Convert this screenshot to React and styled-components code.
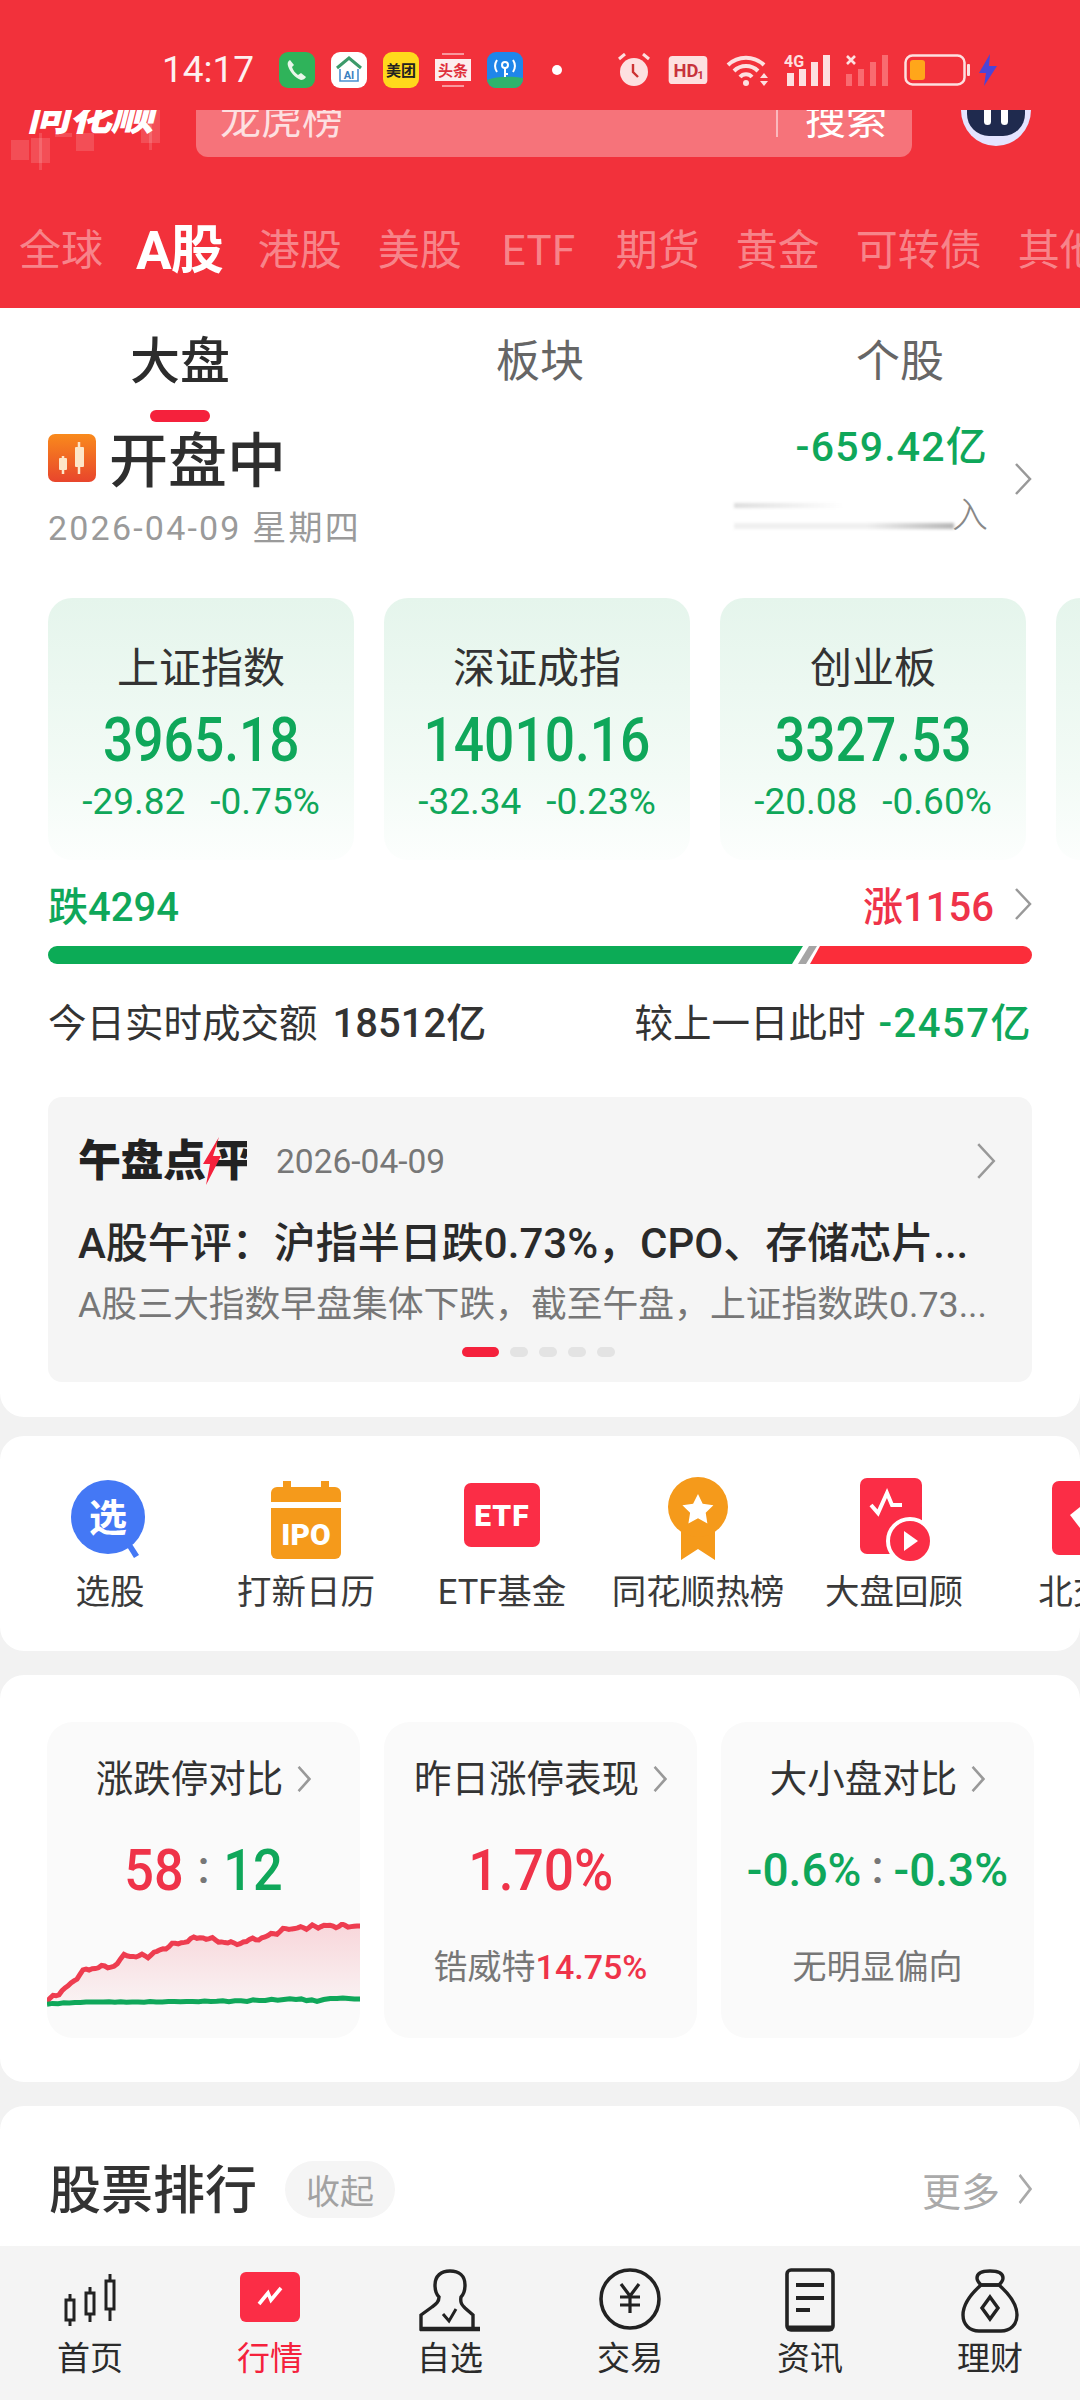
import React from 'react';
import styled, { createGlobalStyle } from 'styled-components';

const RED = '#f2313b';
const UP = '#ef3349';
const DOWN = '#0fa75a';
const CJK = `Roboto, "Noto Sans CJK SC", sans-serif`;

const Global = createGlobalStyle`
  html, body { margin: 0; padding: 0; background: #f2f2f2; }
  body { font-family: ${CJK}; overflow: hidden; }
  * { box-sizing: border-box; }
`;

const Page = styled.div`
  width: 1080px; height: 2400px; display: flex; flex-direction: column; overflow: hidden; background: #f2f2f2;
`;
const Header = styled.header`
  height: 308px; background: ${RED}; flex: none; overflow: hidden;
`;
const StatusBar = styled.div`
  height: 110px; display: flex; align-items: center; padding: 30px 0 0 162px; color: #fff;
`;
const Time = styled.span`
  font-size: 37px; width: 117px; color: #fdf0f0; line-height: 40px;
`;
const AppIcon = styled.svg`
  width: ${p => p.$w || 36}px; height: ${p => p.$h || 36}px; margin-right: ${p => p.$mr ?? 16}px; flex: none; display: block;
`;
const Toolbar = styled.div`
  height: 60px; display: flex; align-items: flex-end; overflow: hidden; padding-left: 27px;
`;
const Logo = styled.div`
  width: 169px; height: 60px; flex: none; position: relative;
`;
const LogoText = styled.span`
  position: absolute; left: 0; bottom: 32px; font-size: 43px; line-height: 46px; font-weight: 900; font-style: italic; color: #fff; letter-spacing: -1px;
`;
const LogoDeco = styled.svg`
  position: absolute; left: -16px; top: 0; width: 185px; height: 60px;
`;
const SearchBox = styled.div`
  width: 716px; height: 74px; flex: none; margin-bottom: 13px; border-radius: 12px; background: rgba(255,255,255,.32);
  display: flex; align-items: center; padding-left: 24px; color: rgba(255,255,255,.78); font-size: 41px;
`;
const SearchHint = styled.span`
  flex: 1; line-height: 46px;
`;
const SearchDivider = styled.span`
  width: 2px; height: 42px; background: rgba(255,255,255,.5); margin-top: -8px;
`;
const SearchBtn = styled.span`
  margin: 0 25px 0 27px; color: #fff; font-size: 41px; line-height: 46px;
`;
const Robot = styled.svg`
  width: 70px; height: 76px; margin: 0 0 24px 49px; flex: none; display: block;
`;
const MarketTabs = styled.nav`
  display: flex; align-items: center; height: 70px; margin-top: 46px; padding-left: 19px; gap: 36px; white-space: nowrap;
`;
const MarketTab = styled.span`
  font-size: ${p => (p.$active ? 53 : 42)}px; font-weight: ${p => (p.$active ? 700 : 400)}; color: ${p => (p.$active ? '#fff' : 'rgba(255,255,255,.42)')};
  letter-spacing: ${p => (p.$active ? '-1px' : p.$latin ? '.5px' : '0')}; line-height: 60px; flex: none;
  padding: 0 ${p => (p.$latin ? 4 : 0)}px; margin: 0 ${p => (p.$active ? '-1px 0 -3px' : '0')};
`;

const Section = styled.section`
  background: #fff; flex: none; height: ${p => p.$h}px; margin-bottom: ${p => p.$mb ?? 24}px;
  border-radius: ${p => (p.$flat ? '0 0 24px 24px' : '24px')}; overflow: hidden;
`;
const TopTabs = styled.div`
  display: grid; grid-template-columns: repeat(3, 360px); height: 114px;
`;
const TopTab = styled.div`
  display: flex; flex-direction: column; align-items: center; padding-top: 25px;
`;
const TopTabLabel = styled.span`
  font-size: ${p => (p.$active ? 50 : 44)}px; line-height: 58px; font-weight: ${p => (p.$active ? 500 : 400)}; color: ${p => (p.$active ? '#2c2c2c' : '#666')};
`;
const TopTabBar = styled.i`
  display: block; width: 60px; height: 12px; border-radius: 6px; background: #f5213c; margin-top: 19px; visibility: ${p => (p.$active ? 'visible' : 'hidden')};
`;
const MarketHead = styled.div`
  display: flex; justify-content: space-between; padding: 10px 48px 0 48px; height: 176px;
`;
const HeadLeft = styled.div`
  display: flex; flex-direction: column;
`;
const HeadTitleRow = styled.div`
  display: flex; align-items: flex-start; gap: 13px;
`;
const HeadTitle = styled.h1`
  margin: 0; font-size: 59px; line-height: 60px; font-weight: 500; color: #2e2e2e;
`;
const HeadIcon = styled.svg`
  width: 48px; height: 48px; margin-top: 2px; display: block;
`;
const HeadDate = styled.div`
  font-size: 34px; line-height: 40px; color: #9a9a9a; margin-top: 16px; letter-spacing: 2.2px;
`;
const HeadRight = styled.div`
  display: flex; align-items: center; gap: 26px; height: 110px; margin-top: -8px;
`;
const FlowCol = styled.div`
  display: flex; flex-direction: column; align-items: flex-end;
`;
const FlowValue = styled.div`
  font-size: 41px; line-height: 46px; font-weight: 500; color: ${DOWN}; letter-spacing: 1.2px;
`;
const FlowHidden = styled.div`
  display: flex; align-items: center; margin-top: 28px; font-size: 36px; font-weight: 300; color: #888; line-height: 36px;
`;
const FlowFade = styled.div`
  width: 220px; height: 26px; margin-right: -2px; filter: blur(1.5px);
  background:
    linear-gradient(90deg, #dcdcdc, #fff 50%) top / 100% 5px no-repeat,
    linear-gradient(90deg, #f0f0f0, #f0f0f0 60%, #b5b5b5) bottom / 100% 6px no-repeat;
`;
const IndexRow = styled.div`
  display: flex; gap: 30px; padding-left: 48px; overflow: hidden;
`;
const IndexCard = styled.div`
  flex: none; width: 306px; height: 262px; border-radius: 24px; background: linear-gradient(180deg, #e5f5ec 0%, #f3fbf6 68%, #fcfefd 100%);
  display: flex; flex-direction: column; align-items: center; padding-top: 46px;
`;
const IndexName = styled.div`
  font-size: 42px; line-height: 50px; color: #333;
`;
const IndexValue = styled.div`
  font-size: 62px; line-height: 72px; font-weight: 500; color: ${DOWN}; transform: scaleX(.86); margin-top: 10px;
`;
const IndexDelta = styled.div`
  display: flex; gap: 25px; font-size: 37px; line-height: 42px; color: ${DOWN}; margin-top: 5px; white-space: nowrap;
`;
const BreadthRow = styled.div`
  display: flex; justify-content: space-between; align-items: center; padding: 0 48px; margin-top: 21px; height: 46px;
  font-size: 40px; font-weight: 500;
`;
const BreadthVal = styled.span`
  color: ${p => (p.$up ? UP : DOWN)};
`;
const BreadthRight = styled.div`
  display: flex; align-items: center; gap: 20px;
`;
const Bar = styled.div`
  margin: 19px 48px 0; height: 18px; display: flex; border-radius: 9px; overflow: hidden; position: relative;
`;
const BarSvg = styled.svg`
  width: 984px; height: 18px; display: block;
`;
const TurnoverRow = styled.div`
  display: flex; justify-content: space-between; padding: 0 48px; margin-top: 36px; height: 48px; font-size: 38.5px; line-height: 48px; color: #333;
`;
const TurnoverVal = styled.b`
  font-weight: 500; color: ${p => (p.$down ? DOWN : '#333')}; margin-left: ${p => (p.$down ? 13 : 15)}px; font-size: 40px; letter-spacing: ${p => (p.$down ? 1.5 : 0)}px;
`;
const ReviewCard = styled.div`
  margin: 49px 48px 0; height: 285px; background: #f5f5f5; border-radius: 14px; padding: 38px 36px 0 30px; display: flex; flex-direction: column;
`;
const ReviewHead = styled.div`
  display: flex; align-items: center; height: 52px;
`;
const ReviewBrand = styled.div`
  display: flex; align-items: center; font-size: 43px; line-height: 50px; font-weight: 900; color: #222; width: 198px; letter-spacing: -.5px;
`;
const Bolt = styled.svg`
  width: 20px; height: 48px; margin: 0 -9px 0 -4px; flex: none; display: block; position: relative; z-index: 1;
`;
const BrandClip = styled.span`
  display: block; width: 34px; overflow: hidden; white-space: nowrap;
`;
const ReviewDate = styled.span`
  font-size: 33.5px; color: #777; flex: 1;
`;
const ReviewTitle = styled.div`
  font-size: 42px; line-height: 50px; font-weight: 500; color: #2a2a2a; margin-top: 32px; white-space: nowrap;
`;
const ReviewDesc = styled.div`
  font-size: 35.8px; line-height: 44px; color: #777; margin-top: 14px; white-space: nowrap;
`;
const Dots = styled.div`
  display: flex; justify-content: center; gap: 11px; margin-top: 20px; margin-left: 3px;
`;
const Dot = styled.i`
  display: block; height: 10px; border-radius: 5px; width: ${p => (p.$on ? 37 : 18)}px; background: ${p => (p.$on ? '#f5213c' : '#e3e3e3')};
`;
const ShortcutRow = styled.div`
  display: flex; padding: 41px 0 0 12px; overflow: hidden;
`;
const Shortcut = styled.div`
  flex: none; width: 196px; display: flex; flex-direction: column; align-items: center;
`;
const ShortcutIcon = styled.svg`
  width: 100px; height: 84px; display: block;
`;
const ShortcutLabel = styled.div`
  font-size: 34.5px; line-height: 42px; color: #3a3a3a; margin-top: 10px; white-space: nowrap;
`;
const StatRow = styled.div`
  display: grid; grid-template-columns: repeat(3, 313px); gap: 24px; padding: 47px 0 0 47px;
`;
const StatCard = styled.div`
  height: 316px; background: #fafafa; border-radius: 26px; display: flex; flex-direction: column; align-items: center; padding-top: 35px; overflow: hidden;
`;
const StatHead = styled.div`
  display: flex; align-items: center; gap: 14px; font-size: 37.5px; line-height: 44px; color: #333;
`;
const StatValue = styled.div`
  display: flex; align-items: center; justify-content: center; gap: ${p => p.$gap ?? 0}px; height: 70px; margin-top: 34px; font-size: ${p => p.$size || 58}px; font-weight: 500; white-space: nowrap;
`;
const Num = styled.span`
  color: ${p => (p.$c === 'up' ? UP : DOWN)}; display: inline-block; transform: scaleX(${p => p.$sx || 1});
`;
const Colon = styled.span`
  color: #777; font-size: 46px; margin: 0 ${p => p.$m ?? 8}px; position: relative; top: -3px;
`;
const StatSub = styled.div`
  font-size: 34px; line-height: 40px; color: #777; margin-top: 42px; white-space: nowrap;
`;
const StatSubNum = styled.span`
  color: ${UP}; font-weight: 500;
`;
const Sparkline = styled.svg`
  width: 313px; height: 92px; display: block; margin-top: 17px; flex: none;
`;
const RankHead = styled.div`
  display: flex; align-items: center; padding: 47px 48px 0 49px;
`;
const RankTitle = styled.h2`
  margin: 6px 0 0; font-size: 52px; line-height: 66px; font-weight: 500; color: #333;
`;
const Pill = styled.span`
  width: 110px; height: 57px; background: #f5f5f5; border-radius: 29px; margin-left: 28px; font-size: 34px; color: #a2a2a2;
  display: flex; align-items: center; justify-content: center;
`;
const More = styled.div`
  margin-left: auto; display: flex; align-items: center; gap: 18px; font-size: 39px; color: #aaa;
`;
const TabBar = styled.nav`
  height: 154px; margin-top: auto; flex: none; background: #f4f4f4; display: grid; grid-template-columns: repeat(6, 180px); position: relative;
`;
const TabItem = styled.div`
  display: flex; flex-direction: column; align-items: center; padding-top: 22px;
`;
const TabIcon = styled.svg`
  width: 70px; height: 66px; display: block;
`;
const TabLabel = styled.div`
  font-size: 33px; line-height: 40px; margin-top: 5px; color: ${p => (p.$active ? '#f5213c' : '#2b2b2b')};
`;
const Rest = styled.div`
  flex: 1; min-height: 0; display: flex; flex-direction: column; overflow: hidden;
`;
const ChevronBox = styled.svg`
  display: block; flex: none; margin-right: ${p => p.$mr || 0}px;
`;

const Chevron = ({ w = 18, h = 32, c = '#999', sw = 2.5, mr = 0 }) => (
  <ChevronBox width={w} height={h} viewBox="0 0 18 32" preserveAspectRatio="none" $mr={mr}>
    <polyline points="2,1 16,16 2,31" fill="none" stroke={c} strokeWidth={sw * (18 / w)} />
  </ChevronBox>
);

function jitter(points, step, amp) {
  let out = [];
  for (let i = 0; i < points.length - 1; i++) {
    const [x0, y0] = points[i];
    const [x1, y1] = points[i + 1];
    const n = Math.max(1, Math.round((x1 - x0) / step));
    for (let k = 0; k < n; k++) {
      const t = k / n;
      const x = x0 + (x1 - x0) * t;
      const noise = Math.sin(x * 1.7) * amp + Math.sin(x * 0.63 + 1) * amp * 0.7;
      out.push([x, y0 + (y1 - y0) * t + noise]);
    }
  }
  out.push(points[points.length - 1]);
  return out;
}
const toPath = pts => pts.map(p => `${p[0].toFixed(1)},${p[1].toFixed(1)}`).join(' ');
const redLine = jitter([[0, 79], [18, 67], [39, 47], [67, 44], [77, 34], [101, 34], [122, 24], [153, 15], [187, 22], [218, 15], [239, 7], [277, 4], [313, 4]], 3, 1.2);
const greenLine = jitter([[0, 82], [39, 80], [91, 80], [194, 79], [249, 77], [270, 79], [290, 76], [313, 77]], 6, .4);

const Spark = () => (
  <Sparkline viewBox="0 0 313 92">
    <defs>
      <linearGradient id="redFill" x1="0" y1="0" x2="0" y2="1">
        <stop offset="0" stopColor="#ef3349" stopOpacity=".18" />
        <stop offset="1" stopColor="#ef3349" stopOpacity=".04" />
      </linearGradient>
    </defs>
    <polygon points={`${toPath(redLine)} 313,80 0,80`} fill="url(#redFill)" />
    <polyline points={toPath(redLine)} fill="none" stroke="#ee3d50" strokeWidth="5" />
    <polyline points={toPath(greenLine)} fill="none" stroke="#0fa75a" strokeWidth="5" />
  </Sparkline>
);

const StatusIcons = () => (
  <>
    <AppIcon viewBox="0 0 36 36">
      <rect width="36" height="36" rx="9" fill="#2fb35a" />
      <path d="M11 8c-2 1-3 3-2 6 2 6 7 12 13 14 2 0 4-1 5-3l-5-4-3 2c-3-2-5-5-6-8l2-2z" fill="#e8f7ea" />
    </AppIcon>
    <AppIcon viewBox="0 0 36 36">
      <rect width="36" height="36" rx="9" fill="#fff" />
      <path d="M6 16 18 6l12 10" fill="none" stroke="#3c9a6a" strokeWidth="3" />
      <path d="M9 17v12h18V17" fill="none" stroke="#4a90d0" strokeWidth="1.6" />
      <text x="18" y="27" fontSize="11" fontWeight="700" fill="#3a7fc0" textAnchor="middle">AI</text>
    </AppIcon>
    <AppIcon viewBox="0 0 36 36">
      <rect width="36" height="36" rx="9" fill="#ffd81c" />
      <text x="18" y="24" fontSize="15" fontWeight="700" fill="#222" textAnchor="middle">美团</text>
    </AppIcon>
    <AppIcon viewBox="0 0 36 36">
      <circle cx="18" cy="18" r="18" fill="#f3323c" />
      <rect x="0" y="7" width="36" height="22" fill="#fdeeee" />
      <path d="M7 2h22M7 34h22" stroke="#fff" strokeWidth="1" />
      <text x="18" y="24" fontSize="15" fontWeight="700" fill="#e0303c" textAnchor="middle">头条</text>
    </AppIcon>
    <AppIcon viewBox="0 0 36 36" $mr={29}>
      <rect width="36" height="36" rx="9" fill="#1f86ea" />
      <path d="M0 28c10-4 24-4 36-2v1a9 9 0 0 1-9 9H9a9 9 0 0 1-9-9z" fill="#2fb36c" />
      <circle cx="18" cy="13" r="3" fill="none" stroke="#fff" strokeWidth="2" />
      <path d="M18 16v9M18 22h3M10 8a11 11 0 0 0 0 12M26 8a11 11 0 0 1 0 12" fill="none" stroke="#fff" strokeWidth="2" />
    </AppIcon>
    <AppIcon viewBox="0 0 10 10" $w={10} $h={10} $mr={55}>
      <circle cx="5" cy="5" r="5" fill="#fff" />
    </AppIcon>
    <AppIcon viewBox="0 0 34 34" $w={34} $h={34} $mr={17}>
      <path d="M2 6 8 1M32 6 26 1" stroke="#fde0e0" strokeWidth="3" />
      <circle cx="17" cy="19" r="14" fill="#fde0e0" />
      <path d="M16 11v8l5 5" fill="none" stroke="#c33" strokeWidth="2.4" />
    </AppIcon>
    <AppIcon viewBox="0 0 40 30" $w={40} $h={29} $mr={18}>
      <rect width="40" height="29" rx="4" fill="#fde0e0" />
      <text x="18" y="22" fontSize="19" fontWeight="700" fill="#c8323c" textAnchor="middle">HD</text>
      <text x="33" y="24" fontSize="12" fontWeight="700" fill="#c8323c" textAnchor="middle">1</text>
    </AppIcon>
    <AppIcon viewBox="0 0 44 32" $w={44} $h={32} $mr={14}>
      <path d="M2 11a26 26 0 0 1 36 0M8 17a17 17 0 0 1 24 0M14 23a8 8 0 0 1 12 0" fill="none" stroke="#fde0e0" strokeWidth="4" />
      <circle cx="20" cy="29" r="3" fill="#fde0e0" />
      <path d="M38 19l-4 5h8zM38 32l-4-5h8z" fill="#fde0e0" />
    </AppIcon>
    <AppIcon viewBox="0 0 46 32" $w={46} $h={32} $mr={16}>
      <text x="0" y="13" fontSize="16" fontWeight="700" fill="#fde0e0">4G</text>
      <rect x="3" y="19" width="7" height="13" fill="#fde0e0" />
      <rect x="15" y="15" width="7" height="17" fill="#fde0e0" />
      <rect x="27" y="8" width="7" height="24" fill="#fde0e0" />
      <rect x="39" y="1" width="7" height="31" fill="#fde0e0" />
    </AppIcon>
    <AppIcon viewBox="0 0 42 32" $w={42} $h={32} $mr={16}>
      <path d="M1 2l8 8M9 2l-8 8" stroke="#fde0e0" strokeWidth="2.6" />
      <rect x="0" y="20" width="6" height="12" fill="#f96b70" />
      <rect x="12" y="15" width="6" height="17" fill="#f96b70" />
      <rect x="24" y="8" width="6" height="24" fill="#f96b70" />
      <rect x="36" y="1" width="6" height="31" fill="#f96b70" />
    </AppIcon>
    <AppIcon viewBox="0 0 66 32" $w={66} $h={32} $mr={8}>
      <rect x="1.5" y="1.5" width="59" height="29" rx="7" fill="none" stroke="#fde0e0" strokeWidth="2.5" />
      <rect x="6" y="6" width="15" height="20" rx="3" fill="#ffa61a" />
      <rect x="63" y="10" width="3" height="12" rx="1" fill="#fde0e0" />
    </AppIcon>
    <AppIcon viewBox="0 0 20 32" $w={20} $h={32} $mr={0}>
      <path d="M12 0 1 19h7L6 32l13-20h-8z" fill="#4a45d8" />
    </AppIcon>
  </>
);

const Shortcuts = [
  ['选股', (
    <>
      <circle cx="48" cy="40" r="37" fill="#4478f5" />
      <path d="M66 68l8 13 5-3-9-14z" fill="#4478f5" />
      <text x="48" y="54" fontSize="38" fontWeight="700" fill="#fff" textAnchor="middle">选</text>
    </>
  )],
  ['打新日历', (
    <>
      <path d="M15 16a6 6 0 0 1 6-6h6V4h8v6h30V4h8v6h6a6 6 0 0 1 6 6v9H15z" fill="#f59a1b" />
      <path d="M15 31h70v45a6 6 0 0 1-6 6H21a6 6 0 0 1-6-6z" fill="#f59a1b" />
      <text x="50" y="68" fontSize="30" fontWeight="900" fill="#fff" textAnchor="middle">IPO</text>
    </>
  )],
  ['ETF基金', (
    <>
      <rect x="12" y="6" width="76" height="64" rx="7" fill="#fb2d46" />
      <text x="50" y="49" fontSize="30" fontWeight="900" fill="#fff" textAnchor="middle" letterSpacing="1">ETF</text>
    </>
  )],
  ['同花顺热榜', (
    <>
      <path d="M33 50v33l17-11 17 11V50z" fill="#f59a1b" />
      <circle cx="50" cy="30" r="30" fill="#f59a1b" />
      <path d="M50 17l4.700 9.800 10.700 1.500-7.700 7.500 1.700 10.700L50 41.200l-9.600 5.300 1.700-10.700-7.700-7.500 10.700-1.500z" fill="#fff" />
    </>
  )],
  ['大盘回顾', (
    <>
      <rect x="16" y="1" width="62" height="76" rx="7" fill="#fb2d46" />
      <path d="M27 28l7 8 9-20 5 12h10" fill="none" stroke="#fff" strokeWidth="4" />
      <circle cx="66" cy="64" r="22" fill="#fb2d46" stroke="#fff" strokeWidth="4" />
      <path d="M60 54l14 10-14 10z" fill="#fff" />
    </>
  )],
  ['北交所', (
    <>
      <rect x="12" y="4" width="76" height="74" rx="7" fill="#fb2d46" />
      <path d="M50 22 30 38l20 26 20-26z" fill="#fff" />
    </>
  )],
];

const TabIconMap = {
  home: (
    <g fill="none" stroke="#222" strokeWidth="3">
      <path d="M15 26v32" /><rect x="11" y="32" width="8" height="20" fill="#f4f4f4" />
      <path d="M35 19v35" /><rect x="31" y="25" width="8" height="21" fill="#f4f4f4" />
      <path d="M55 6v47" /><rect x="51" y="13" width="8" height="28" fill="#f4f4f4" />
    </g>
  ),
  quote: (
    <g>
      <rect x="5" y="4" width="60" height="50" rx="6" fill="#fb2d46" />
      <path d="M24 36l9-11 3 7 10-12" fill="none" stroke="#fff" strokeWidth="3.6" />
    </g>
  ),
  user: (
    <g fill="none" stroke="#222" strokeWidth="3.4">
      <path d="M24 29c-3-3-4-8-4-12 0-9 6-14 15-14s15 5 15 14c0 4-1 9-4 12-1 6 1 8 4 11l8 7v14H6V47l11-8c4-3 7-5 7-10z" />
      <path d="M5 61h60" strokeWidth="4.5" />
      <path d="M28 46l6 7 7-12" strokeWidth="3" />
    </g>
  ),
  trade: (
    <g fill="none" stroke="#222" strokeWidth="3.6">
      <circle cx="35" cy="31" r="29" />
      <path d="M26 16l9 12 9-12M35 28v17M25 29h20M25 37h20" strokeWidth="3.2" />
    </g>
  ),
  news: (
    <g fill="none" stroke="#222" strokeWidth="3.6">
      <rect x="12" y="2" width="46" height="60" rx="4" />
      <path d="M12 60h46" strokeWidth="5" />
      <path d="M21 17h28M21 30h28M21 42h14" strokeWidth="4" />
    </g>
  ),
  wealth: (
    <g fill="none" stroke="#222" strokeWidth="3.4">
      <path d="M26 17c-3-3-4-5-4-7 0-5 6-7 13-7s13 2 13 7c0 2-1 4-4 7z" />
      <path d="M26 17C17 25 8 36 8 47c0 10 7 16 16 16h22c9 0 16-6 16-16 0-11-9-22-18-30z" />
      <path d="M35 29l8 11-8 11-8-11z" />
    </g>
  ),
};

const tabs = [
  ['首页', 'home'], ['行情', 'quote', true], ['自选', 'user'], ['交易', 'trade'], ['资讯', 'news'], ['理财', 'wealth'],
];

export default function App() {
  return (
    <Page>
      <Global />
      <Header>
        <StatusBar>
          <Time>14:17</Time>
          <StatusIcons />
        </StatusBar>
        <Toolbar>
          <Logo>
            <LogoDeco viewBox="0 0 185 60">
              <g fill="rgba(255,255,255,.14)">
                <rect x="0" y="30" width="18" height="20" />
                <rect x="20" y="28" width="19" height="25" />
                <rect x="28" y="23" width="3" height="37" />
                <rect x="44" y="23" width="17" height="4" />
                <rect x="65" y="23" width="18" height="18" />
                <rect x="130" y="0" width="19" height="33" />
                <rect x="138" y="0" width="3" height="40" />
              </g>
            </LogoDeco>
            <LogoText>同花顺</LogoText>
          </Logo>
          <SearchBox>
            <SearchHint>龙虎榜</SearchHint>
            <SearchDivider />
            <SearchBtn>搜索</SearchBtn>
          </SearchBox>
          <Robot viewBox="0 0 70 76">
            <ellipse cx="35" cy="40" rx="35" ry="36" fill="#e4e4ff" />
            <rect x="6" y="8" width="58" height="58" rx="22" fill="#1f2a4e" />
            <rect x="23" y="28" width="7" height="27" rx="3.500" fill="#fff" />
            <rect x="40" y="28" width="7" height="27" rx="3.500" fill="#fff" />
          </Robot>
        </Toolbar>
        <MarketTabs>
          {['全球', 'A股', '港股', '美股', 'ETF', '期货', '黄金', '可转债', '其他'].map(t => (
            <MarketTab key={t} $active={t === 'A股'} $latin={t === 'ETF'}>{t}</MarketTab>
          ))}
        </MarketTabs>
      </Header>
      <Rest>
        <Section $h={1109} $mb={19} $flat>
          <TopTabs>
            {['大盘', '板块', '个股'].map((t, i) => (
              <TopTab key={t}>
                <TopTabLabel $active={i === 0}>{t}</TopTabLabel>
                <TopTabBar $active={i === 0} />
              </TopTab>
            ))}
          </TopTabs>
          <MarketHead>
            <HeadLeft>
              <HeadTitleRow>
                <HeadIcon viewBox="0 0 48 48">
                  <defs>
                    <linearGradient id="hi" x1="0" y1="0" x2="0" y2="1">
                      <stop offset="0" stopColor="#f98a1c" />
                      <stop offset="1" stopColor="#e8452c" />
                    </linearGradient>
                  </defs>
                  <rect width="48" height="48" rx="7" fill="url(#hi)" />
                  <path d="M15 22v18M31 8v32" stroke="#fde6c8" strokeWidth="2.500" />
                  <rect x="11" y="24" width="8" height="12" rx="1" fill="#fde6c8" />
                  <rect x="27" y="13" width="9" height="20" rx="1" fill="#fde6c8" />
                </HeadIcon>
                <HeadTitle>开盘中</HeadTitle>
              </HeadTitleRow>
              <HeadDate>2026-04-09 星期四</HeadDate>
            </HeadLeft>
            <HeadRight>
              <FlowCol>
                <FlowValue>-659.42亿</FlowValue>
                <FlowHidden><FlowFade />入</FlowHidden>
              </FlowCol>
              <Chevron />
            </HeadRight>
          </MarketHead>
          <IndexRow>
            {[
              ['上证指数', '3965.18', '-29.82', '-0.75%'],
              ['深证成指', '14010.16', '-32.34', '-0.23%'],
              ['创业板', '3327.53', '-20.08', '-0.60%'],
              ['', '', '', ''],
            ].map((c, i) => (
              <IndexCard key={i}>
                <IndexName>{c[0]}</IndexName>
                <IndexValue>{c[1]}</IndexValue>
                <IndexDelta><span>{c[2]}</span><span>{c[3]}</span></IndexDelta>
              </IndexCard>
            ))}
          </IndexRow>
          <BreadthRow>
            <BreadthVal>跌4294</BreadthVal>
            <BreadthRight>
              <BreadthVal $up>涨1156</BreadthVal>
              <Chevron />
            </BreadthRight>
          </BreadthRow>
          <Bar>
            <BarSvg viewBox="0 0 984 18">
              <polygon points="0,0 755,0 744,18 0,18" fill="#0cab56" />
              <polygon points="761,0 769,0 758,18 750,18" fill="#a5a5a5" />
              <polygon points="772,0 984,0 984,18 762,18" fill="#fb2d3a" />
            </BarSvg>
          </Bar>
          <TurnoverRow>
            <div>今日实时成交额<TurnoverVal>18512亿</TurnoverVal></div>
            <div>较上一日此时<TurnoverVal $down>-2457亿</TurnoverVal></div>
          </TurnoverRow>
          <ReviewCard>
            <ReviewHead>
              <ReviewBrand>
                午盘点
                <Bolt viewBox="0 0 20 48"><path d="M17 0 1 27h7L4 48 19 19h-8z" fill="#f5213c" /></Bolt>
                <BrandClip>平</BrandClip>
              </ReviewBrand>
              <ReviewDate>2026-04-09</ReviewDate>
              <Chevron w={20} h={36} />
            </ReviewHead>
            <ReviewTitle>A股午评：沪指半日跌0.73%，CPO、存储芯片...</ReviewTitle>
            <ReviewDesc>A股三大指数早盘集体下跌，截至午盘，上证指数跌0.73...</ReviewDesc>
            <Dots>
              <Dot $on /><Dot /><Dot /><Dot /><Dot />
            </Dots>
          </ReviewCard>
        </Section>
        <Section $h={215}>
          <ShortcutRow>
            {Shortcuts.map(([label, art]) => (
              <Shortcut key={label}>
                <ShortcutIcon viewBox="0 0 100 84">{art}</ShortcutIcon>
                <ShortcutLabel>{label}</ShortcutLabel>
              </Shortcut>
            ))}
          </ShortcutRow>
        </Section>
        <Section $h={407}>
          <StatRow>
            <StatCard>
              <StatHead>涨跌停对比<Chevron w={14} h={26} /></StatHead>
              <StatValue>
                <Num $c="up" $sx=".9">58</Num>
                <Colon $m={10}>:</Colon>
                <Num $sx=".9">12</Num>
              </StatValue>
              <Spark />
            </StatCard>
            <StatCard>
              <StatHead>昨日涨停表现<Chevron w={14} h={26} /></StatHead>
              <StatValue><Num $c="up" $sx=".92">1.70%</Num></StatValue>
              <StatSub>锆威特<StatSubNum>14.75%</StatSubNum></StatSub>
            </StatCard>
            <StatCard>
              <StatHead>大小盘对比<Chevron w={14} h={26} /></StatHead>
              <StatValue $size={46}>
                <Num>-0.6%</Num>
                <Colon $m={10}>:</Colon>
                <Num>-0.3%</Num>
              </StatValue>
              <StatSub>无明显偏向</StatSub>
            </StatCard>
          </StatRow>
        </Section>
        <Section $h={200} $mb={0}>
          <RankHead>
            <RankTitle>股票排行</RankTitle>
            <Pill>收起</Pill>
            <More>更多<Chevron w={14} h={30} c="#aaa" /></More>
          </RankHead>
        </Section>
      </Rest>
      <TabBar>
        {tabs.map(([label, key, active]) => (
          <TabItem key={label}>
            <TabIcon viewBox="0 0 70 66">{TabIconMap[key]}</TabIcon>
            <TabLabel $active={active}>{label}</TabLabel>
          </TabItem>
        ))}
      </TabBar>
    </Page>
  );
}
